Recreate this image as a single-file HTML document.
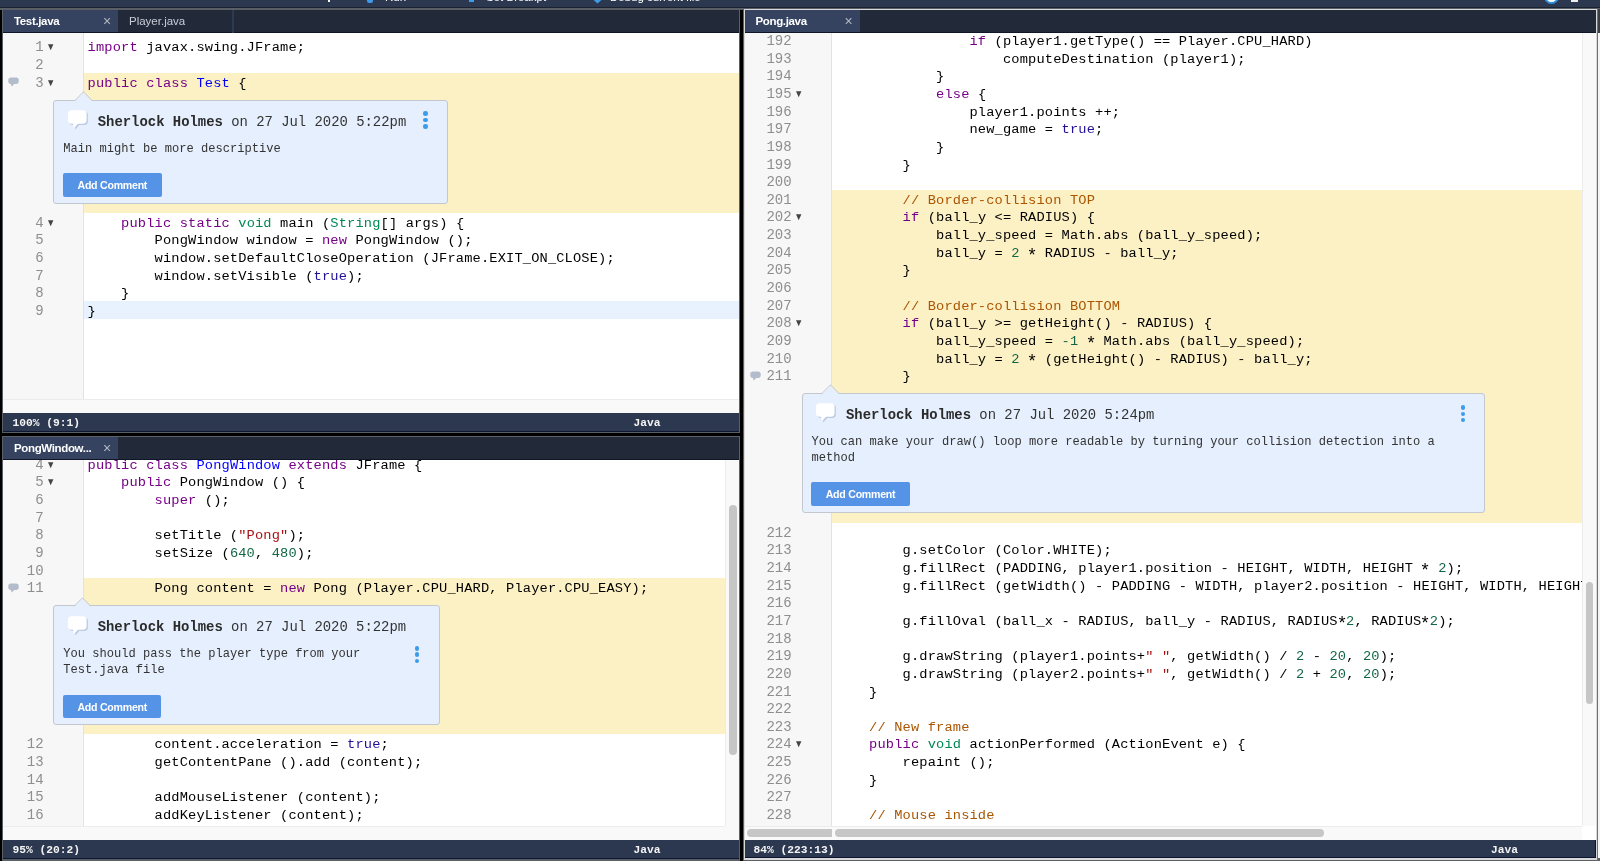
<!DOCTYPE html><html><head><meta charset="utf-8"><style>
*{margin:0;padding:0;box-sizing:border-box}
html,body{will-change:transform;width:1600px;height:861px;overflow:hidden;background:#5b5f66;position:relative}
div,span,svg{position:absolute}
span{position:static}
.abs{position:absolute}
.mono{font-family:"Liberation Mono",monospace}
.ln{font-family:"Liberation Mono",monospace;font-size:14px;line-height:17.65px;color:#8e8e8e;white-space:pre}
.cl{font-family:"Liberation Mono",monospace;font-size:13.7px;letter-spacing:0.155px;line-height:17.65px;color:#000;white-space:pre}
.ast{display:inline-block;transform:translateY(3px) scale(1.3)}.k{color:#708}.t{color:#085}.a{color:#219}.n{color:#164}.s{color:#a11}.c{color:#a50}.d{color:#00f}
.fold{}
.gic{width:11px;height:10px}
.cbox{background:#e6effd;border:1px solid #c3c8cf;border-radius:3px}
.bub{width:23px;height:20px}
.hdr{font-family:"Liberation Mono",monospace;font-size:13.9px;line-height:17px;color:#333;white-space:pre}
.hdr b{font-weight:bold;color:#2b2b2b}
.ctext{font-family:"Liberation Mono",monospace;font-size:12.08px;line-height:15.8px;color:#333;white-space:pre}
.btn{width:98.5px;height:23.5px;background:#5593e6;border-radius:2px;color:#fff;font-family:"Liberation Sans",sans-serif;font-size:10.6px;line-height:24.5px;text-align:center;font-weight:bold;letter-spacing:-0.25px}
.arrow{position:absolute}
.hb{top:-8.6px;font-family:"Liberation Sans",sans-serif;font-size:11.5px;line-height:12px;color:#fff;white-space:pre;font-weight:normal}
.dot{width:4.5px;height:4.5px;border-radius:50%;background:#3d9be9}
.tabbar{background:#222a3a;border-bottom:1px solid #0e1628}
.tab{background:#354361;height:100%}
.tabt{font-family:"Liberation Sans",sans-serif;font-size:11.5px;line-height:22px;color:#fff;white-space:pre;font-weight:bold;letter-spacing:-0.35px}
.tabx{color:#b4b8c0;font-family:"Liberation Sans",sans-serif;font-size:14px;line-height:22px}
.status{background:#2c3850;border-bottom:1px solid #0d1530}
.st{font-family:"Liberation Mono",monospace;font-size:11.25px;font-weight:bold;color:#f4f4f4;line-height:18px;white-space:pre}
.gut{background:#f7f7f7;border-right:1px solid #e2e2e2}
.hscr{background:#f9f9f9;border-top:1px solid #ececec}
.thumb{background:#c6c6c6;border-radius:4px}
</style></head><body><div style="left:0;top:0;width:1600px;height:6.5px;background:#2c3850"></div><div style="left:0;top:6.5px;width:1600px;height:1px;background:#1a2231"></div><div style="left:0;top:7.5px;width:1600px;height:2px;background:#5a5e65"></div><div class="hb" style="left:385px">Run</div><div class="hb" style="left:486px">Set Breakpt</div><div class="hb" style="left:610px">Debug current file</div><div style="left:328px;top:0;width:1.6px;height:2px;background:#fff"></div><div style="left:367px;top:0;width:6px;height:3px;background:#3d9be9;border-radius:0 0 2px 2px"></div><div style="left:469px;top:0;width:5px;height:2px;background:#3d9be9"></div><svg style="left:593px;top:-4px" width="9" height="8" viewBox="0 0 9 8"><path d="M4.5 0 L9 3.5 L4.5 7.5 L0 3.5Z" fill="#3d9be9"/></svg><div style="left:1571px;top:0;width:7px;height:1.5px;background:#eee"></div><div style="left:1544px;top:-11px;width:15px;height:15px;border-radius:50%;border:2.5px solid #2f8fdc;background:#fff"></div><div style="left:0;top:9.5px;width:2.4px;height:852px;background:#000"></div><div style="left:740.2px;top:9.5px;width:3px;height:852px;background:#000"></div><div class="tabbar" style="left:3px;top:10px;width:736.2px;height:23.2px"></div><div style="left:3px;top:10px;width:115px;height:22px;background:#354361"><div class="tabt" style="left:11px;top:0;color:#fff;font-weight:bold;letter-spacing:-0.35px">Test.java</div><div class="tabx" style="left:100px;top:-0.5px">&#215;</div></div><div style="left:118px;top:10px;width:115px;height:22px;background:#222a3a"><div class="tabt" style="left:11px;top:0;color:#c9cdd6;font-weight:normal;letter-spacing:0">Player.java</div></div><div style="left:232.2px;top:10px;width:1.5px;height:22.5px;background:#2e3954"></div><div style="left:3px;top:33.2px;width:736.2px;height:366px;background:#fff;overflow:hidden"></div><div class="gut" style="left:3px;top:33.2px;width:81px;height:366px"></div><div style="left:84px;top:72.70px;width:655.2px;height:140.10px;background:#fcf0c5"></div><div style="left:84px;top:301.05px;width:655.2px;height:17.65px;background:#e8f2ff"></div><div class="ln" style="top:39.40px;left:-16.40px;width:60px;text-align:right">1</div><svg class="fold" style="top:44.40px;left:48.00px" width="6" height="7" viewBox="0 0 6 7"><path d="M0 0.2 H5.4 L2.7 6.3 Z" fill="#444"/></svg><div class="cl" style="top:39.40px;left:87.60px"><span class="k">import</span> javax.swing.JFrame;</div><div class="ln" style="top:57.05px;left:-16.40px;width:60px;text-align:right">2</div><div class="ln" style="top:74.70px;left:-16.40px;width:60px;text-align:right">3</div><svg class="fold" style="top:79.70px;left:48.00px" width="6" height="7" viewBox="0 0 6 7"><path d="M0 0.2 H5.4 L2.7 6.3 Z" fill="#444"/></svg><div class="gic" style="top:77.20px;left:7.50px"><svg width="12" height="10" viewBox="0 0 12 10"><rect x="0.3" y="0.5" width="10.4" height="6.4" rx="2.6" fill="#b3bccb"/><path d="M2.6 6.5 L3.7 9.6 L6.8 6.5 Z" fill="#b3bccb"/></svg></div><div class="cl" style="top:74.70px;left:87.60px"><span class="k">public</span> <span class="k">class</span> <span class="d">Test</span> {</div><div class="ln" style="top:214.80px;left:-16.40px;width:60px;text-align:right">4</div><svg class="fold" style="top:219.80px;left:48.00px" width="6" height="7" viewBox="0 0 6 7"><path d="M0 0.2 H5.4 L2.7 6.3 Z" fill="#444"/></svg><div class="cl" style="top:214.80px;left:87.60px">    <span class="k">public</span> <span class="k">static</span> <span class="t">void</span> main (<span class="t">String</span>[] args) {</div><div class="ln" style="top:232.45px;left:-16.40px;width:60px;text-align:right">5</div><div class="cl" style="top:232.45px;left:87.60px">        PongWindow window = <span class="k">new</span> PongWindow ();</div><div class="ln" style="top:250.10px;left:-16.40px;width:60px;text-align:right">6</div><div class="cl" style="top:250.10px;left:87.60px">        window.setDefaultCloseOperation (JFrame.EXIT_ON_CLOSE);</div><div class="ln" style="top:267.75px;left:-16.40px;width:60px;text-align:right">7</div><div class="cl" style="top:267.75px;left:87.60px">        window.setVisible (<span class="a">true</span>);</div><div class="ln" style="top:285.40px;left:-16.40px;width:60px;text-align:right">8</div><div class="cl" style="top:285.40px;left:87.60px">    }</div><div class="ln" style="top:303.05px;left:-16.40px;width:60px;text-align:right">9</div><div class="cl" style="top:303.05px;left:87.60px">}</div><div class="cbox" style="left:53.40px;top:100.00px;width:394.20px;height:103.60px"><div class="bub" style="left:12.6px;top:9.3px"><svg width="23" height="20" viewBox="0 0 23 20"><g transform="translate(1.3,1.2)" fill="#bccbe2"><rect x="0.9" y="0.3" width="18.7" height="13.4" rx="3.6"/><path d="M5.9 13 L7 18.2 L11.5 13 Z"/></g><g fill="#fff"><rect x="0.9" y="0.3" width="18.7" height="13.4" rx="3.6"/><path d="M5.9 13 L7 18.2 L11.5 13 Z"/></g></svg></div><div class="hdr" style="left:43.4px;top:12.5px"><b>Sherlock Holmes</b> on 27 Jul 2020 5:22pm</div><div class="ctext" style="left:8.9px;top:40.70px">Main might be more descriptive</div><div class="btn" style="left:8.7px;top:72.00px">Add Comment</div></div><svg class="arrow" style="left:74.50px;top:91.20px" width="17" height="10" viewBox="0 0 17 10"><path d="M0 10 L8.5 1.2 L17 10 Z" fill="#e6effd"/><path d="M0 9.4 L8.5 0.8 L17 9.4" fill="none" stroke="#c3c8cf" stroke-width="1"/></svg><div class="dot" style="left:423.35px;top:111.35px"></div><div class="dot" style="left:423.35px;top:117.75px"></div><div class="dot" style="left:423.35px;top:124.05px"></div><div class="hscr" style="left:3px;top:399px;width:736.2px;height:14px"></div><div class="status" style="left:3px;top:413px;width:736.2px;height:18.6px"></div><div class="st" style="left:12.5px;top:414.2px">100% (9:1)</div><div class="st" style="left:633.5px;top:414.2px">Java</div><div style="left:3px;top:431.5px;width:736.2px;height:1.7px;background:#5a5f66"></div><div style="left:0;top:433.2px;width:740.2px;height:2.7px;background:#000"></div><div style="left:3px;top:435.9px;width:736.2px;height:1.2px;background:#5e6268"></div><div class="tabbar" style="left:3px;top:437.1px;width:736.2px;height:22.6px"></div><div style="left:3px;top:437.1px;width:115px;height:22px;background:#354361"><div class="tabt" style="left:11px;top:0;color:#fff;font-weight:bold;letter-spacing:-0.35px">PongWindow...</div><div class="tabx" style="left:100px;top:-0.5px">&#215;</div></div><div style="left:3px;top:459.7px;width:736.2px;height:366.3px;background:#fff"></div><div class="gut" style="left:3px;top:459.7px;width:81px;height:366.3px"></div><div style="left:84px;top:578.35px;width:641.4px;height:155.95px;background:#fcf0c5"></div><div style="left:3px;top:459.7px;width:736.2px;height:366.3px;overflow:hidden"><div class="ln" style="top:-2.90px;left:-19.40px;width:60px;text-align:right">4</div><svg class="fold" style="top:2.10px;left:45.00px" width="6" height="7" viewBox="0 0 6 7"><path d="M0 0.2 H5.4 L2.7 6.3 Z" fill="#444"/></svg><div class="cl" style="top:-2.90px;left:84.60px"><span class="k">public</span> <span class="k">class</span> <span class="d">PongWindow</span> <span class="k">extends</span> JFrame {</div><div class="ln" style="top:14.75px;left:-19.40px;width:60px;text-align:right">5</div><svg class="fold" style="top:19.75px;left:45.00px" width="6" height="7" viewBox="0 0 6 7"><path d="M0 0.2 H5.4 L2.7 6.3 Z" fill="#444"/></svg><div class="cl" style="top:14.75px;left:84.60px">    <span class="k">public</span> PongWindow () {</div><div class="ln" style="top:32.40px;left:-19.40px;width:60px;text-align:right">6</div><div class="cl" style="top:32.40px;left:84.60px">        <span class="k">super</span> ();</div><div class="ln" style="top:50.05px;left:-19.40px;width:60px;text-align:right">7</div><div class="ln" style="top:67.70px;left:-19.40px;width:60px;text-align:right">8</div><div class="cl" style="top:67.70px;left:84.60px">        setTitle (<span class="s">"Pong"</span>);</div><div class="ln" style="top:85.35px;left:-19.40px;width:60px;text-align:right">9</div><div class="cl" style="top:85.35px;left:84.60px">        setSize (<span class="n">640</span>, <span class="n">480</span>);</div><div class="ln" style="top:103.00px;left:-19.40px;width:60px;text-align:right">10</div><div class="ln" style="top:120.65px;left:-19.40px;width:60px;text-align:right">11</div><div class="gic" style="top:123.15px;left:4.50px"><svg width="12" height="10" viewBox="0 0 12 10"><rect x="0.3" y="0.5" width="10.4" height="6.4" rx="2.6" fill="#b3bccb"/><path d="M2.6 6.5 L3.7 9.6 L6.8 6.5 Z" fill="#b3bccb"/></svg></div><div class="cl" style="top:120.65px;left:84.60px">        Pong content = <span class="k">new</span> Pong (Player.CPU_HARD, Player.CPU_EASY);</div><div class="ln" style="top:276.60px;left:-19.40px;width:60px;text-align:right">12</div><div class="cl" style="top:276.60px;left:84.60px">        content.acceleration = <span class="a">true</span>;</div><div class="ln" style="top:294.25px;left:-19.40px;width:60px;text-align:right">13</div><div class="cl" style="top:294.25px;left:84.60px">        getContentPane ().add (content);</div><div class="ln" style="top:311.90px;left:-19.40px;width:60px;text-align:right">14</div><div class="ln" style="top:329.55px;left:-19.40px;width:60px;text-align:right">15</div><div class="cl" style="top:329.55px;left:84.60px">        addMouseListener (content);</div><div class="ln" style="top:347.20px;left:-19.40px;width:60px;text-align:right">16</div><div class="cl" style="top:347.20px;left:84.60px">        addKeyListener (content);</div></div><div class="cbox" style="left:53.30px;top:605.30px;width:386.30px;height:119.80px"><div class="bub" style="left:12.6px;top:9.3px"><svg width="23" height="20" viewBox="0 0 23 20"><g transform="translate(1.3,1.2)" fill="#bccbe2"><rect x="0.9" y="0.3" width="18.7" height="13.4" rx="3.6"/><path d="M5.9 13 L7 18.2 L11.5 13 Z"/></g><g fill="#fff"><rect x="0.9" y="0.3" width="18.7" height="13.4" rx="3.6"/><path d="M5.9 13 L7 18.2 L11.5 13 Z"/></g></svg></div><div class="hdr" style="left:43.4px;top:12.5px"><b>Sherlock Holmes</b> on 27 Jul 2020 5:22pm</div><div class="ctext" style="left:8.9px;top:40.70px">You should pass the player type from your</div><div class="ctext" style="left:8.9px;top:56.50px">Test.java file</div><div class="btn" style="left:8.7px;top:88.40px">Add Comment</div></div><svg class="arrow" style="left:74.30px;top:596.50px" width="17" height="10" viewBox="0 0 17 10"><path d="M0 10 L8.5 1.2 L17 10 Z" fill="#e6effd"/><path d="M0 9.4 L8.5 0.8 L17 9.4" fill="none" stroke="#c3c8cf" stroke-width="1"/></svg><div class="dot" style="left:414.75px;top:646.05px"></div><div class="dot" style="left:414.75px;top:652.35px"></div><div class="dot" style="left:414.75px;top:658.65px"></div><div style="left:725.4px;top:459.7px;width:13.8px;height:366.3px;background:#f9f9f9;border-left:1px solid #ececec"></div><div class="thumb" style="left:729.1px;top:504.7px;width:7.7px;height:250px"></div><div class="hscr" style="left:3px;top:826px;width:722.4px;height:14px"></div><div style="left:725.4px;top:826px;width:13.8px;height:14px;background:#f9f9f9"></div><div class="status" style="left:3px;top:840px;width:736.2px;height:18.6px"></div><div class="st" style="left:12.5px;top:841.2px">95% (20:2)</div><div class="st" style="left:633.5px;top:841.2px">Java</div><div style="left:743.5px;top:9px;width:853.8px;height:851px;background:#d9d9d9"></div><div class="tabbar" style="left:744.5px;top:10.3px;width:851.3px;height:22.9px"></div><div style="left:744.5px;top:10.3px;width:115px;height:22px;background:#354361"><div class="tabt" style="left:11px;top:0;color:#fff;font-weight:bold;letter-spacing:-0.35px">Pong.java</div><div class="tabx" style="left:100px;top:-0.5px">&#215;</div></div><div style="left:744.5px;top:33.2px;width:851.3px;height:793px;background:#fff"></div><div class="gut" style="left:744.5px;top:33.2px;width:87.5px;height:793px"></div><div style="left:832px;top:189.85px;width:750px;height:332.85px;background:#fcf0c5"></div><div style="left:744.5px;top:33.2px;width:837.5px;height:793px;overflow:hidden"><div class="ln" style="top:-0.20px;left:-12.90px;width:60px;text-align:right">192</div><div class="cl" style="top:-0.20px;left:91.10px">                <span class="k">if</span> (player1.getType() == Player.CPU_HARD)</div><div class="ln" style="top:17.45px;left:-12.90px;width:60px;text-align:right">193</div><div class="cl" style="top:17.45px;left:91.10px">                    computeDestination (player1);</div><div class="ln" style="top:35.10px;left:-12.90px;width:60px;text-align:right">194</div><div class="cl" style="top:35.10px;left:91.10px">            }</div><div class="ln" style="top:52.75px;left:-12.90px;width:60px;text-align:right">195</div><svg class="fold" style="top:57.75px;left:51.00px" width="6" height="7" viewBox="0 0 6 7"><path d="M0 0.2 H5.4 L2.7 6.3 Z" fill="#444"/></svg><div class="cl" style="top:52.75px;left:91.10px">            <span class="k">else</span> {</div><div class="ln" style="top:70.40px;left:-12.90px;width:60px;text-align:right">196</div><div class="cl" style="top:70.40px;left:91.10px">                player1.points ++;</div><div class="ln" style="top:88.05px;left:-12.90px;width:60px;text-align:right">197</div><div class="cl" style="top:88.05px;left:91.10px">                new_game = <span class="a">true</span>;</div><div class="ln" style="top:105.70px;left:-12.90px;width:60px;text-align:right">198</div><div class="cl" style="top:105.70px;left:91.10px">            }</div><div class="ln" style="top:123.35px;left:-12.90px;width:60px;text-align:right">199</div><div class="cl" style="top:123.35px;left:91.10px">        }</div><div class="ln" style="top:141.00px;left:-12.90px;width:60px;text-align:right">200</div><div class="ln" style="top:158.65px;left:-12.90px;width:60px;text-align:right">201</div><div class="cl" style="top:158.65px;left:91.10px">        <span class="c">// Border-collision TOP</span></div><div class="ln" style="top:176.30px;left:-12.90px;width:60px;text-align:right">202</div><svg class="fold" style="top:181.30px;left:51.00px" width="6" height="7" viewBox="0 0 6 7"><path d="M0 0.2 H5.4 L2.7 6.3 Z" fill="#444"/></svg><div class="cl" style="top:176.30px;left:91.10px">        <span class="k">if</span> (ball_y &lt;= RADIUS) {</div><div class="ln" style="top:193.95px;left:-12.90px;width:60px;text-align:right">203</div><div class="cl" style="top:193.95px;left:91.10px">            ball_y_speed = Math.abs (ball_y_speed);</div><div class="ln" style="top:211.60px;left:-12.90px;width:60px;text-align:right">204</div><div class="cl" style="top:211.60px;left:91.10px">            ball_y = <span class="n">2</span> <span class="ast">*</span> RADIUS - ball_y;</div><div class="ln" style="top:229.25px;left:-12.90px;width:60px;text-align:right">205</div><div class="cl" style="top:229.25px;left:91.10px">        }</div><div class="ln" style="top:246.90px;left:-12.90px;width:60px;text-align:right">206</div><div class="ln" style="top:264.55px;left:-12.90px;width:60px;text-align:right">207</div><div class="cl" style="top:264.55px;left:91.10px">        <span class="c">// Border-collision BOTTOM</span></div><div class="ln" style="top:282.20px;left:-12.90px;width:60px;text-align:right">208</div><svg class="fold" style="top:287.20px;left:51.00px" width="6" height="7" viewBox="0 0 6 7"><path d="M0 0.2 H5.4 L2.7 6.3 Z" fill="#444"/></svg><div class="cl" style="top:282.20px;left:91.10px">        <span class="k">if</span> (ball_y &gt;= getHeight() - RADIUS) {</div><div class="ln" style="top:299.85px;left:-12.90px;width:60px;text-align:right">209</div><div class="cl" style="top:299.85px;left:91.10px">            ball_y_speed = <span class="n">-1</span> <span class="ast">*</span> Math.abs (ball_y_speed);</div><div class="ln" style="top:317.50px;left:-12.90px;width:60px;text-align:right">210</div><div class="cl" style="top:317.50px;left:91.10px">            ball_y = <span class="n">2</span> <span class="ast">*</span> (getHeight() - RADIUS) - ball_y;</div><div class="ln" style="top:335.15px;left:-12.90px;width:60px;text-align:right">211</div><div class="gic" style="top:337.65px;left:5.00px"><svg width="12" height="10" viewBox="0 0 12 10"><rect x="0.3" y="0.5" width="10.4" height="6.4" rx="2.6" fill="#b3bccb"/><path d="M2.6 6.5 L3.7 9.6 L6.8 6.5 Z" fill="#b3bccb"/></svg></div><div class="cl" style="top:335.15px;left:91.10px">        }</div><div class="ln" style="top:491.50px;left:-12.90px;width:60px;text-align:right">212</div><div class="ln" style="top:509.15px;left:-12.90px;width:60px;text-align:right">213</div><div class="cl" style="top:509.15px;left:91.10px">        g.setColor (Color.WHITE);</div><div class="ln" style="top:526.80px;left:-12.90px;width:60px;text-align:right">214</div><div class="cl" style="top:526.80px;left:91.10px">        g.fillRect (PADDING, player1.position - HEIGHT, WIDTH, HEIGHT <span class="ast">*</span> <span class="n">2</span>);</div><div class="ln" style="top:544.45px;left:-12.90px;width:60px;text-align:right">215</div><div class="cl" style="top:544.45px;left:91.10px">        g.fillRect (getWidth() - PADDING - WIDTH, player2.position - HEIGHT, WIDTH, HEIGHT <span class="ast">*</span> <span class="n">2</span>);</div><div class="ln" style="top:562.10px;left:-12.90px;width:60px;text-align:right">216</div><div class="ln" style="top:579.75px;left:-12.90px;width:60px;text-align:right">217</div><div class="cl" style="top:579.75px;left:91.10px">        g.fillOval (ball_x - RADIUS, ball_y - RADIUS, RADIUS<span class="ast">*</span><span class="n">2</span>, RADIUS<span class="ast">*</span><span class="n">2</span>);</div><div class="ln" style="top:597.40px;left:-12.90px;width:60px;text-align:right">218</div><div class="ln" style="top:615.05px;left:-12.90px;width:60px;text-align:right">219</div><div class="cl" style="top:615.05px;left:91.10px">        g.drawString (player1.points+<span class="s">" "</span>, getWidth() / <span class="n">2</span> - <span class="n">20</span>, <span class="n">20</span>);</div><div class="ln" style="top:632.70px;left:-12.90px;width:60px;text-align:right">220</div><div class="cl" style="top:632.70px;left:91.10px">        g.drawString (player2.points+<span class="s">" "</span>, getWidth() / <span class="n">2</span> + <span class="n">20</span>, <span class="n">20</span>);</div><div class="ln" style="top:650.35px;left:-12.90px;width:60px;text-align:right">221</div><div class="cl" style="top:650.35px;left:91.10px">    }</div><div class="ln" style="top:668.00px;left:-12.90px;width:60px;text-align:right">222</div><div class="ln" style="top:685.65px;left:-12.90px;width:60px;text-align:right">223</div><div class="cl" style="top:685.65px;left:91.10px">    <span class="c">// New frame</span></div><div class="ln" style="top:703.30px;left:-12.90px;width:60px;text-align:right">224</div><svg class="fold" style="top:708.30px;left:51.00px" width="6" height="7" viewBox="0 0 6 7"><path d="M0 0.2 H5.4 L2.7 6.3 Z" fill="#444"/></svg><div class="cl" style="top:703.30px;left:91.10px">    <span class="k">public</span> <span class="t">void</span> actionPerformed (ActionEvent e) {</div><div class="ln" style="top:720.95px;left:-12.90px;width:60px;text-align:right">225</div><div class="cl" style="top:720.95px;left:91.10px">        repaint ();</div><div class="ln" style="top:738.60px;left:-12.90px;width:60px;text-align:right">226</div><div class="cl" style="top:738.60px;left:91.10px">    }</div><div class="ln" style="top:756.25px;left:-12.90px;width:60px;text-align:right">227</div><div class="ln" style="top:773.90px;left:-12.90px;width:60px;text-align:right">228</div><div class="cl" style="top:773.90px;left:91.10px">    <span class="c">// Mouse inside</span></div></div><div class="cbox" style="left:801.60px;top:393.10px;width:683.20px;height:119.80px"><div class="bub" style="left:12.6px;top:9.3px"><svg width="23" height="20" viewBox="0 0 23 20"><g transform="translate(1.3,1.2)" fill="#bccbe2"><rect x="0.9" y="0.3" width="18.7" height="13.4" rx="3.6"/><path d="M5.9 13 L7 18.2 L11.5 13 Z"/></g><g fill="#fff"><rect x="0.9" y="0.3" width="18.7" height="13.4" rx="3.6"/><path d="M5.9 13 L7 18.2 L11.5 13 Z"/></g></svg></div><div class="hdr" style="left:43.4px;top:12.5px"><b>Sherlock Holmes</b> on 27 Jul 2020 5:24pm</div><div class="ctext" style="left:8.9px;top:40.70px">You can make your draw() loop more readable by turning your collision detection into a</div><div class="ctext" style="left:8.9px;top:56.50px">method</div><div class="btn" style="left:8.7px;top:88.40px">Add Comment</div></div><svg class="arrow" style="left:822.10px;top:384.30px" width="17" height="10" viewBox="0 0 17 10"><path d="M0 10 L8.5 1.2 L17 10 Z" fill="#e6effd"/><path d="M0 9.4 L8.5 0.8 L17 9.4" fill="none" stroke="#c3c8cf" stroke-width="1"/></svg><div class="dot" style="left:1460.55px;top:405.35px"></div><div class="dot" style="left:1460.55px;top:411.55px"></div><div class="dot" style="left:1460.55px;top:417.75px"></div><div style="left:1582px;top:33.2px;width:13.8px;height:793px;background:#f9f9f9;border-left:1px solid #ececec"></div><div class="thumb" style="left:1586.3px;top:582.1px;width:6.8px;height:121.6px"></div><div class="hscr" style="left:744.5px;top:826px;width:837.5px;height:14px"></div><div style="left:1582px;top:826px;width:13.8px;height:14px;background:#fff"></div><div style="left:747px;top:829.2px;width:84.5px;height:7.7px;background:#c6c6c6;border-radius:4px 0 0 4px"></div><div class="thumb" style="left:834.5px;top:829.2px;width:489.7px;height:7.7px"></div><div class="status" style="left:744.5px;top:840px;width:851.3px;height:18.4px;border-right:1px solid #0d1530"></div><div class="st" style="left:753.5px;top:841.2px">84% (223:13)</div><div class="st" style="left:1491px;top:841.2px">Java</div><div style="left:1597.2px;top:9px;width:1px;height:852px;background:#6d7178"></div><div style="left:1598.2px;top:9px;width:2px;height:24px;background:#3a3e45"></div><div style="left:1598.2px;top:33px;width:2px;height:825px;background:#f4f4f4"></div></body></html>
